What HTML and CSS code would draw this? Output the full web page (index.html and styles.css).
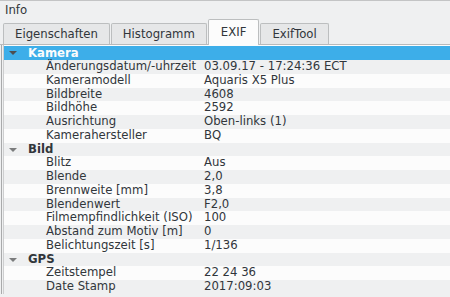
FILE: index.html
```html
<!DOCTYPE html>
<html lang="de">
<head>
    <meta charset="UTF-8">
    <title>Info</title>
    <link rel="stylesheet" href="styles.css">
</head>
<body>
    <div class="panel">
        <div class="title">Info</div>

        <div class="tabbar">
            <div class="tab tab-first">Eigenschaften</div>
            <div class="tab">Histogramm</div>
            <div class="tab active">EXIF</div>
            <div class="tab">ExifTool</div>
        </div>

        <div class="tree">
            <div class="rows">
                <div class="row group selected"><span class="arrow"></span>Kamera</div>
                <div class="row"><span class="key">Änderungsdatum/-uhrzeit</span><span class="val">03.09.17 - 17:24:36 ECT</span></div>
                <div class="row"><span class="key">Kameramodell</span><span class="val">Aquaris X5 Plus</span></div>
                <div class="row"><span class="key">Bildbreite</span><span class="val">4608</span></div>
                <div class="row"><span class="key">Bildhöhe</span><span class="val">2592</span></div>
                <div class="row"><span class="key">Ausrichtung</span><span class="val">Oben-links (1)</span></div>
                <div class="row"><span class="key">Kamerahersteller</span><span class="val">BQ</span></div>

                <div class="row group"><span class="arrow"></span>Bild</div>
                <div class="row"><span class="key">Blitz</span><span class="val">Aus</span></div>
                <div class="row"><span class="key">Blende</span><span class="val">2,0</span></div>
                <div class="row"><span class="key">Brennweite [mm]</span><span class="val">3,8</span></div>
                <div class="row"><span class="key">Blendenwert</span><span class="val">F2,0</span></div>
                <div class="row"><span class="key">Filmempfindlichkeit (ISO)</span><span class="val">100</span></div>
                <div class="row"><span class="key">Abstand zum Motiv [m]</span><span class="val">0</span></div>
                <div class="row"><span class="key">Belichtungszeit [s]</span><span class="val">1/136</span></div>

                <div class="row group"><span class="arrow"></span>GPS</div>
                <div class="row"><span class="key">Zeitstempel</span><span class="val">22 24 36</span></div>
                <div class="row"><span class="key">Date Stamp</span><span class="val">2017:09:03</span></div>
            </div>
        </div>
    </div>
</body>
</html>
```

FILE: styles.css
```css
body {
    margin: 0;
    font-family: "DejaVu Sans", sans-serif;
    font-size: 11.7px;
    color: #31363b;
    background-color: #eff0f1;
    overflow: hidden;
}

.panel {
    height: 297px;
    border-top: 1px solid #c3c4c5;
    box-sizing: border-box;
    overflow: hidden;
}

.title {
    height: 18px;
    line-height: 18px;
    padding-left: 5px;
}

.tabbar {
    display: flex;
    align-items: flex-end;
    height: 25px;
    padding-left: 3px;
    border-bottom: 1px solid #b9babb;
}

.tab {
    height: 21px;
    line-height: 20px;
    padding: 0 11px;
    margin-right: 1px;
    background-color: #e6e7e8;
    border: 1px solid #bcbebf;
    border-bottom: none;
    border-radius: 2px 2px 0 0;
    box-sizing: border-box;
}

.tab.active {
    height: 26px;
    line-height: 24px;
    padding: 0 12px;
    background-color: #fcfcfc;
    margin-bottom: -1px;
}

.tree {
    margin-left: 1px;
    border-left: 1px solid #a9aaab;
    padding-left: 1px;
}

.rows {
    border-left: 1px solid #cdcecf;
    background-color: #fcfcfc;
    padding-top: 1px;
}

.row {
    display: flex;
    height: 13.76px;
    line-height: 13.76px;
    white-space: nowrap;
}

.row:first-child {
    height: 14px;
    line-height: 14px;
}

.row:nth-child(even) {
    background-color: #eff0f1;
}

.key {
    width: 158px;
    padding-left: 42px;
}

.group {
    font-weight: bold;
    padding-left: 5px;
}

.group.selected {
    background-color: #3daee9;
    color: #fcfcfc;
}

.arrow {
    width: 0;
    height: 0;
    margin: 5px 11px 0 0;
    border-left: 4px solid transparent;
    border-right: 4px solid transparent;
    border-top: 4px solid #7b7c7d;
}

.selected .arrow {
    border-top-color: #4d4f51;
}
```
